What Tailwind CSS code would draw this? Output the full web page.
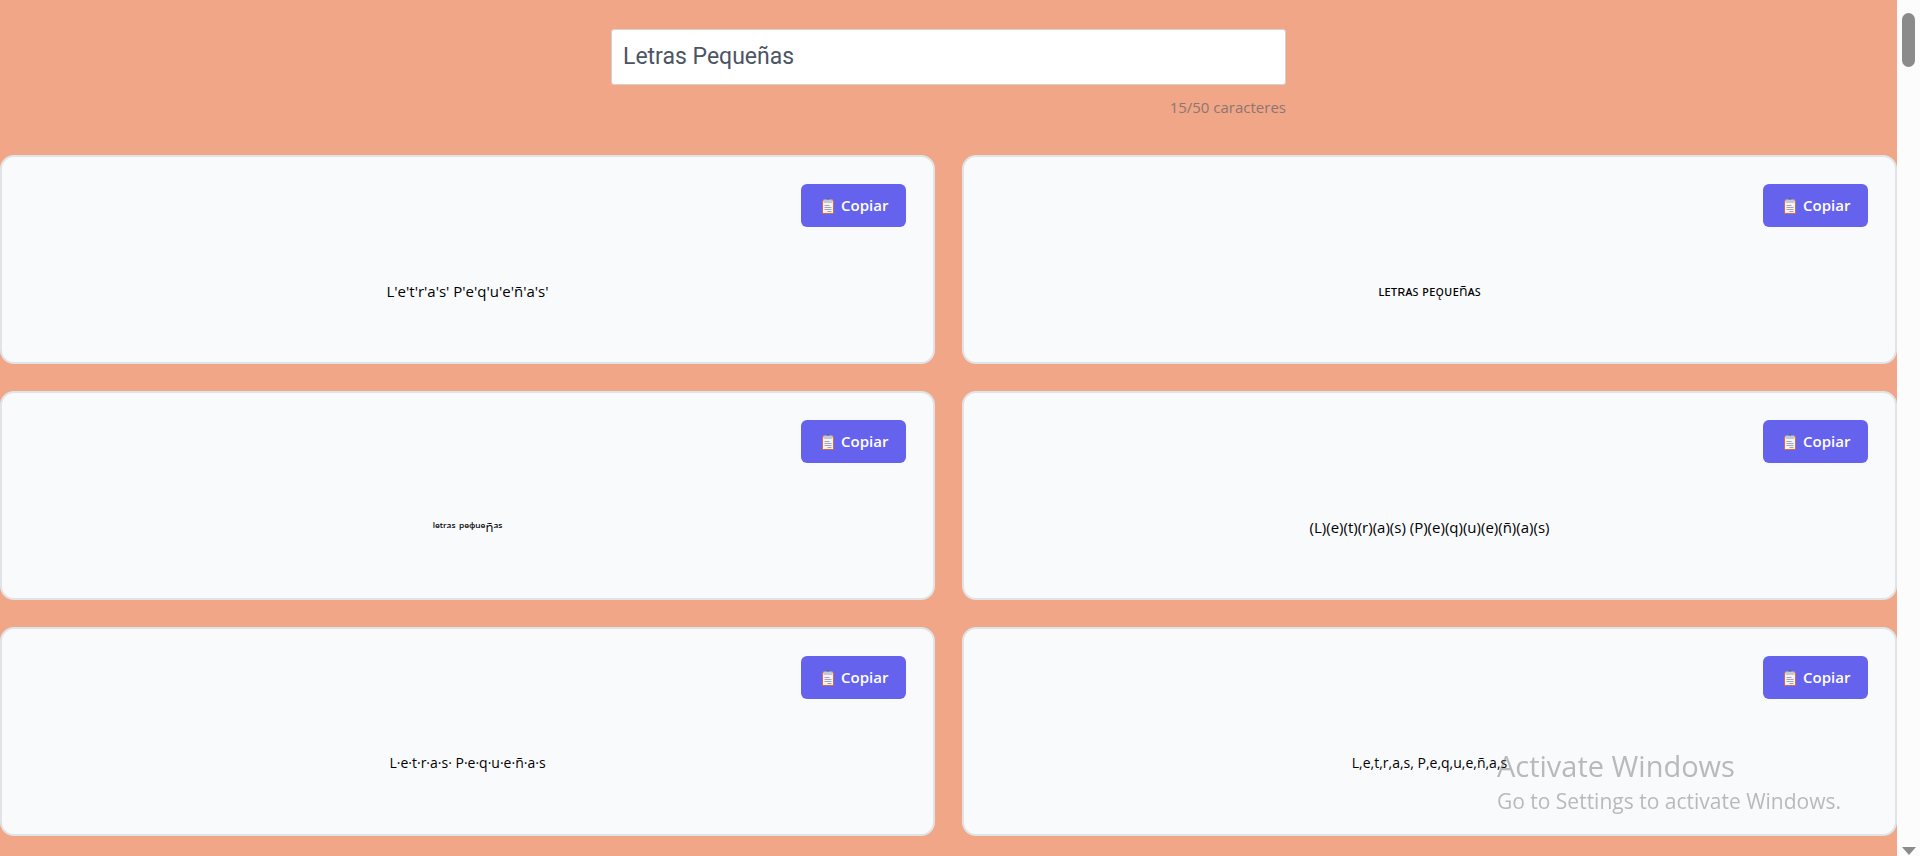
<!DOCTYPE html>
<html lang="es">

<head>
  <meta charset="UTF-8" />
  <meta name="viewport" content="width=device-width, initial-scale=1.0" />
  <title>Letras Pequeñas</title>
  <script src="https://cdn.jsdelivr.net/npm/@tailwindcss/browser@4"></script>
</head>

<body class="flex min-h-screen bg-[#f1a687] font-['Open_Sans','Noto_Sans',sans-serif] text-black">
  <!-- Icono del portapapeles -->
  <svg class="hidden">
    <symbol id="clipboard" viewBox="0 0 12 16">
      <rect x="0" y="2" width="12" height="14" rx="1" fill="#d9683f" />
      <rect x="1" y="3" width="10" height="12" fill="#f4f4f8" />
      <path d="M1.500 1.500h3a1.500 1.500 0 0 1 3 0h3V5h-9z" fill="#c3c8d4" />
      <path d="M4.500 1.500a1.500 1.200 0 0 1 3 0z" fill="#3b3b4a" />
      <path d="M2.500 7.500h5M2.500 9.500h7M2.500 11.500h7M5.500 13.500h4" stroke="#a3a3b5" stroke-width="1" />
    </symbol>
  </svg>

  <main class="min-w-0 flex-1 pt-[29px]">
    <!-- Texto de entrada -->
    <div class="mx-auto mb-9 w-full max-w-[675px]">
      <input type="text" aria-label="Texto" value="Letras Pequeñas" maxlength="50"
        class="block h-14 w-full rounded-[3px] border border-[#d8d0cd] bg-white px-[11px] pb-0.5 font-[Roboto] text-[23px] text-[#4b5563]" />
      <p class="mt-2.5 text-right text-[15px] leading-6 text-[#8b7670]">15/50 caracteres</p>
    </div>

    <!-- Estilos -->
    <div class="grid grid-cols-2 gap-[27px]">
      <div class="flex h-[209px] flex-col rounded-[14px] border-2 border-[#e0e4e7] bg-[#f9fafc] p-[27px]">
        <button class="flex h-[43px] w-[105px] items-center gap-[7px] self-end rounded-md bg-[#6562ee] pl-[21px] text-[15px] font-semibold text-white">
          <svg class="h-4 w-3"><use href="#clipboard" /></svg>Copiar
        </button>
        <p class="mt-[52px] text-center text-[15px] leading-6">L'e't'r'a's' P'e'q'u'e'ñ'a's'</p>
      </div>
      <div class="flex h-[209px] flex-col rounded-[14px] border-2 border-[#e0e4e7] bg-[#f9fafc] p-[27px]">
        <button class="flex h-[43px] w-[105px] items-center gap-[7px] self-end rounded-md bg-[#6562ee] pl-[21px] text-[15px] font-semibold text-white">
          <svg class="h-4 w-3"><use href="#clipboard" /></svg>Copiar
        </button>
        <p class="mt-[52px] text-center text-sm leading-6">ʟᴇᴛʀᴀꜱ ᴘᴇǫᴜᴇñᴀꜱ</p>
      </div>
      <div class="flex h-[209px] flex-col rounded-[14px] border-2 border-[#e0e4e7] bg-[#f9fafc] p-[27px]">
        <button class="flex h-[43px] w-[105px] items-center gap-[7px] self-end rounded-md bg-[#6562ee] pl-[21px] text-[15px] font-semibold text-white">
          <svg class="h-4 w-3"><use href="#clipboard" /></svg>Copiar
        </button>
        <p class="mt-[52px] text-center text-[13px] leading-6 font-medium">ˡᵉᵗʳᵃˢ ᵖᵉᵠᵘᵉñᵃˢ</p>
      </div>
      <div class="flex h-[209px] flex-col rounded-[14px] border-2 border-[#e0e4e7] bg-[#f9fafc] p-[27px]">
        <button class="flex h-[43px] w-[105px] items-center gap-[7px] self-end rounded-md bg-[#6562ee] pl-[21px] text-[15px] font-semibold text-white">
          <svg class="h-4 w-3"><use href="#clipboard" /></svg>Copiar
        </button>
        <p class="mt-[52px] text-center text-[15px] leading-6">(L)(e)(t)(r)(a)(s) (P)(e)(q)(u)(e)(ñ)(a)(s)</p>
      </div>
      <div class="flex h-[209px] flex-col rounded-[14px] border-2 border-[#e0e4e7] bg-[#f9fafc] p-[27px]">
        <button class="flex h-[43px] w-[105px] items-center gap-[7px] self-end rounded-md bg-[#6562ee] pl-[21px] text-[15px] font-semibold text-white">
          <svg class="h-4 w-3"><use href="#clipboard" /></svg>Copiar
        </button>
        <p class="mt-[52px] text-center text-sm leading-6">L·e·t·r·a·s· P·e·q·u·e·ñ·a·s</p>
      </div>
      <div class="flex h-[209px] flex-col rounded-[14px] border-2 border-[#e0e4e7] bg-[#f9fafc] p-[27px]">
        <button class="flex h-[43px] w-[105px] items-center gap-[7px] self-end rounded-md bg-[#6562ee] pl-[21px] text-[15px] font-semibold text-white">
          <svg class="h-4 w-3"><use href="#clipboard" /></svg>Copiar
        </button>
        <p class="mt-[52px] text-center text-sm leading-6">L,e,t,r,a,s, P,e,q,u,e,ñ,a,s</p>
      </div>
    </div>
  </main>

  <!-- Barra de desplazamiento -->
  <div class="flex w-[23px] flex-col items-center justify-between bg-[#fcfcfc] pt-[13px]">
    <div class="h-[54px] w-[13px] rounded-full bg-[#8b8b8b]"></div>
    <svg class="h-[9px] w-[14px]" viewBox="0 0 14 9"><path d="M0 0h14L7 8z" fill="#8b8b8b" /></svg>
  </div>

  <!-- Aviso sobre el contenido -->
  <div class="pointer-events-none fixed right-[79px] bottom-10 whitespace-nowrap text-[#6b6b6b]/45">
    <p class="text-[29px] leading-10">Activate Windows</p>
    <p class="text-[21px] leading-[30px]">Go to Settings to activate Windows.</p>
  </div>
</body>

</html>
